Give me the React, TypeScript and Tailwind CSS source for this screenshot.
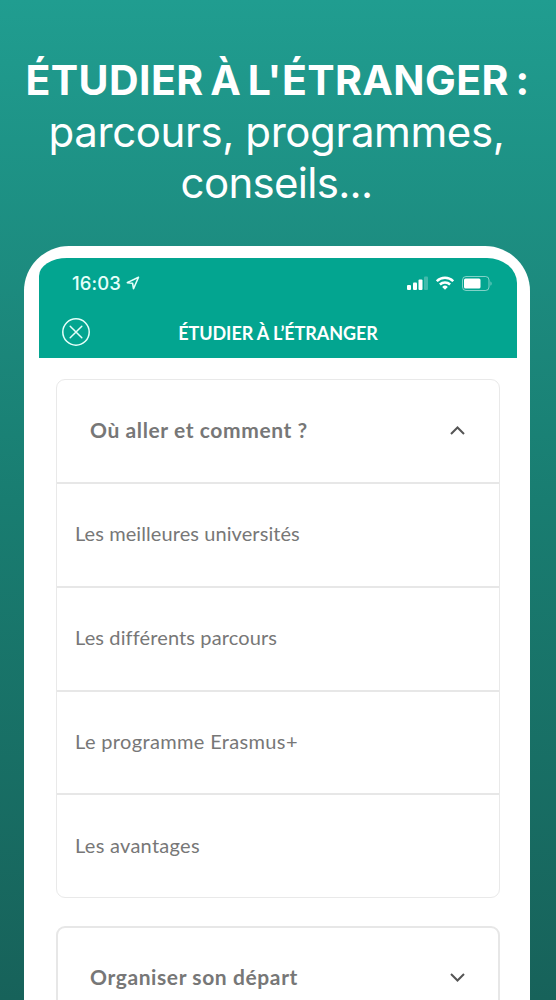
import { ReactNode } from 'react';

const articles = [
  { title: 'Les meilleures universités', tracking: 'tracking-[0.08px]' },
  { title: 'Les différents parcours', tracking: 'tracking-[0.12px]' },
  { title: 'Le programme Erasmus+', tracking: 'tracking-[0.35px]' },
  { title: 'Les avantages', tracking: 'tracking-[0.28px]' },
];

function Headline() {
  return (
    <h1 className="flex h-[246px] flex-col items-center whitespace-nowrap pt-[55px] font-['Inter','Roboto',sans-serif] text-[42px] leading-[51px] text-white">
      <span className="-ml-px text-[41px] font-bold tracking-[0.4px] [word-spacing:-3.5px]">ÉTUDIER À L'ÉTRANGER :</span>
      <span className="-ml-[3px] tracking-[-0.4px]">parcours, programmes,</span>
      <span className="-ml-[3px] tracking-[-0.7px]">conseils...</span>
    </h1>
  );
}

function StatusBar() {
  return (
    <div className="flex h-[50px] items-center justify-between pl-[33px] pr-[25px]">
      <div className="flex items-center gap-[5px] text-[#e6fffa]">
        <span className="font-['Inter',sans-serif] text-[18.5px] font-medium leading-none tracking-[0.1px]">16:03</span>
        <svg className="h-[14px] w-[14px]" viewBox="0 0 14 14" fill="none" stroke="currentColor" strokeWidth="1.6" strokeLinejoin="round">
          <path d="M12.5 1.3 1.3 6.6l5.3.7.9 5.4z" />
        </svg>
      </div>
      <div className="flex items-center text-white">
        <svg className="h-[14px] w-[22px]" viewBox="0 0 22 14" fill="currentColor">
          <rect x="0" y="9" width="4" height="5" rx="1" />
          <rect x="6" y="6.5" width="4" height="7.5" rx="1" />
          <rect x="11.5" y="3.5" width="4" height="10.5" rx="1" />
          <rect x="17" y="0.5" width="4" height="13.5" rx="1" opacity="0.25" />
        </svg>
        <svg className="ml-[7px] h-[14px] w-[18px]" viewBox="0 0 18 14" fill="none" stroke="currentColor" strokeWidth="2.5">
          <path d="M.8 5.2a11.7 11.7 0 0 1 16.4 0" />
          <path d="M3.9 8.5a7.3 7.3 0 0 1 10.2 0" />
          <path d="M9 13.7 6.2 10.9a4 4 0 0 1 5.6 0z" fill="currentColor" stroke="none" />
        </svg>
        <svg className="ml-[8px] h-[15px] w-[30px]" viewBox="0 0 30 15" fill="none">
          <rect x="0.5" y="0.5" width="26.5" height="14" rx="3.5" stroke="currentColor" opacity="0.5" />
          <rect x="2" y="2.5" width="16.5" height="10" rx="1.5" fill="currentColor" />
          <path d="M28.5 5.2v4.6c1.4-.7 1.4-3.9 0-4.6z" fill="currentColor" opacity="0.5" />
        </svg>
      </div>
    </div>
  );
}

function NavBar() {
  return (
    <div className="grid h-[50px] grid-cols-[28px_1fr_28px] items-center px-[23px]">
      <svg className="-mt-[2px] h-[28px] w-[28px]" viewBox="0 0 28 28" fill="none" stroke="#e6fffa" strokeWidth="1.5" strokeLinecap="round">
        <circle cx="14" cy="14" r="13.2" />
        <path d="m8.2 8.2 11.6 11.6M19.8 8.2 8.2 19.8" />
      </svg>
      <h2 className="pt-[1px] text-center text-[18px] font-bold tracking-[-0.08px] text-white">ÉTUDIER À L’ÉTRANGER</h2>
    </div>
  );
}

function SectionTitle({ children, open }: { children: ReactNode; open?: boolean }) {
  return (
    <div className="flex h-[102px] items-center justify-between pb-[2px] pl-[33px] pr-[34px]">
      <h3 className="text-[21px] font-bold tracking-[0.6px] text-[#777]">{children}</h3>
      <svg className="mt-px h-[9px] w-[15px]" viewBox="0 0 15 9" fill="none" stroke="#555" strokeWidth="2">
        <path d={open ? 'm1 8 6.5-6.5L14 8' : 'm1 1 6.5 6.5L14 1'} />
      </svg>
    </div>
  );
}

export default function App() {
  return (
    <main className="h-[1000px] w-[556px] overflow-hidden bg-linear-to-b from-[#209d90] via-[#197d71] via-50% to-[#17625a] font-['Lato',sans-serif]">
      <Headline />
      <div className="mx-auto h-[800px] w-[506px] -translate-x-px rounded-t-[45px] bg-white pt-[12px]">
        <header className="ml-[15px] h-[100px] w-[478px] rounded-tl-[28px_18px] rounded-tr-[30px_25px] bg-[#03a590]">
          <StatusBar />
          <NavBar />
        </header>
        <div className="ml-[32px] mt-[21px] w-[444px]">
          <section className="h-[519px] rounded-[9px] border border-[#e9e9e9]">
            <SectionTitle open>Où aller et comment ?</SectionTitle>
            <ul>
              {articles.map(({ title, tracking }) => (
                <li
                  key={title}
                  className={`flex h-[103.8px] items-center border-t-2 border-[#e7e7e7] pb-[3px] pl-[18px] text-[20px] text-[#777] ${tracking}`}
                >
                  {title}
                </li>
              ))}
            </ul>
          </section>
          <section className="mt-[28px] h-[140px] rounded-[9px] border-2 border-[#e7e7e7]">
            <div className="-mx-px -mt-px">
              <SectionTitle>Organiser son départ</SectionTitle>
            </div>
          </section>
        </div>
      </div>
    </main>
  );
}
